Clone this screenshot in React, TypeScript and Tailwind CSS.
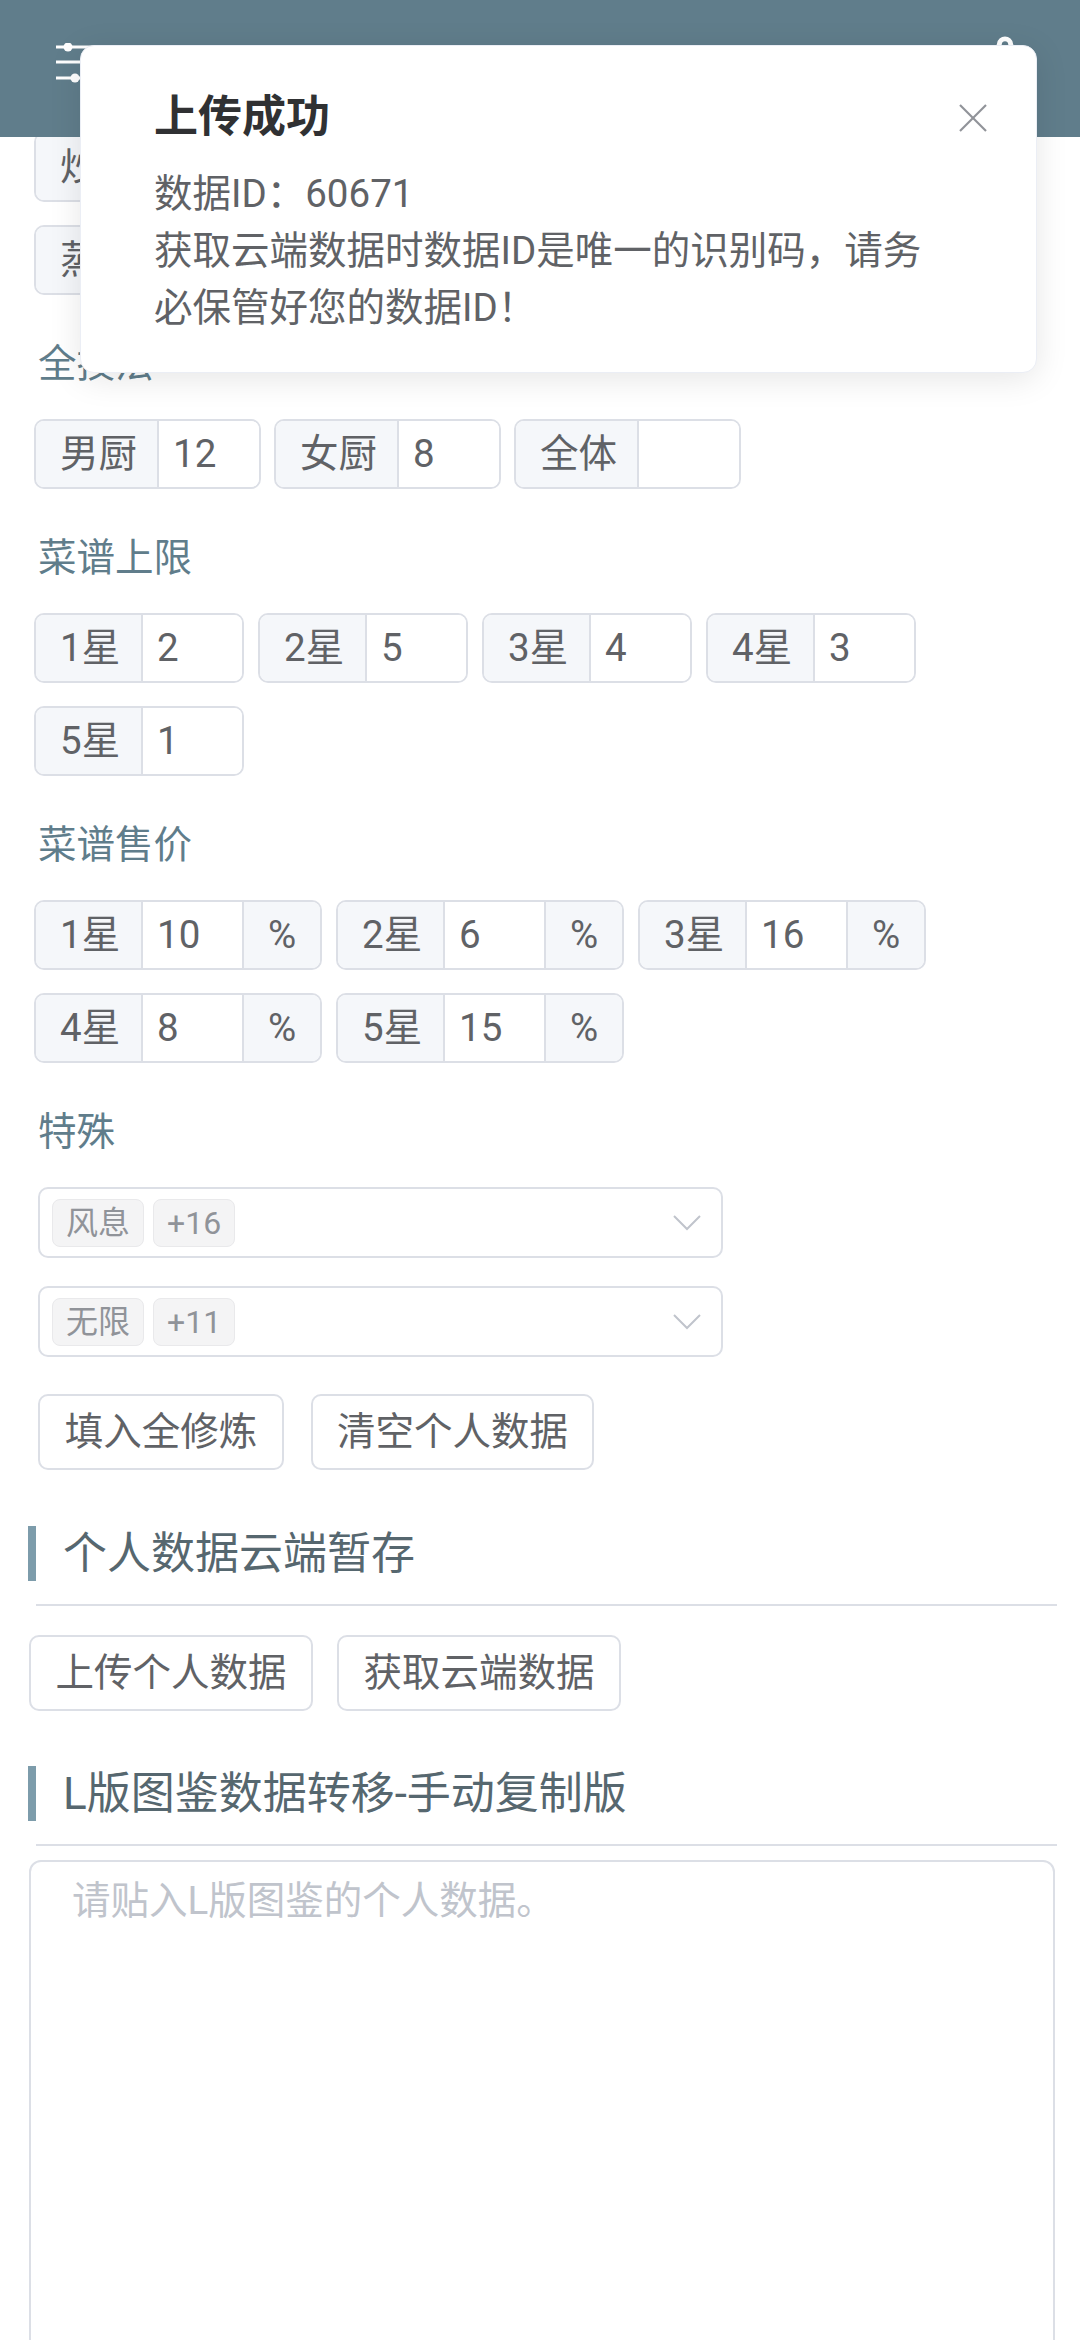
import React from "react";
import { Settings } from "lucide-react";

type GroupProps = {
  label: string;
  value?: string;
  lw: string;
  iw: string;
  suffix?: boolean;
};

function Group({ label, value, lw, iw, suffix }: GroupProps) {
  return (
    <div className="flex h-[70px] overflow-hidden rounded-[10px] border-2 border-[#dcdfe6] text-[38.5px] text-[#606266]">
      <div className={`${lw} flex items-center border-r-2 border-[#dcdfe6] bg-[#f5f7fa] pl-[24px] whitespace-nowrap`}>
        {label}
      </div>
      <div className={`${iw} flex items-center bg-white pl-[14px]`}>{value}</div>
      {suffix && (
        <div className="flex w-[78px] items-center justify-center border-l-2 border-[#dcdfe6] bg-[#f5f7fa]">
          %
        </div>
      )}
    </div>
  );
}

function SectionLabel({ children }: { children: React.ReactNode }) {
  return (
    <div className="mt-[40px] h-[58px] pl-[4px] text-[38.5px] leading-[58px] text-[#607d8b]">
      {children}
    </div>
  );
}

function Chevron() {
  return (
    <svg width="28" height="16" viewBox="0 0 28 16" fill="none">
      <polyline points="1,1 14,14 27,1" stroke="#c0c4cc" strokeWidth="2" fill="none" />
    </svg>
  );
}

function SelectBox({ tag, more }: { tag: string; more: string }) {
  return (
    <div className="ml-[4px] flex h-[71px] w-[685px] items-center rounded-[10px] border-2 border-[#dcdfe6] bg-white pl-[12px] pr-[20px]">
      <div className="flex h-[48px] items-center rounded-[8px] border border-[#e9e9eb] bg-[#f4f4f5] px-[13px] text-[32px] text-[#909399]">
        {tag}
      </div>
      <div className="ml-[9px] flex h-[48px] items-center rounded-[8px] border border-[#e9e9eb] bg-[#f4f4f5] px-[13px] text-[32px] text-[#909399]">
        {more}
      </div>
      <div className="ml-auto flex items-center">
        <Chevron />
      </div>
    </div>
  );
}

function Btn({ children, w }: { children: React.ReactNode; w: string }) {
  return (
    <div className={`${w} flex h-[76px] items-center justify-center rounded-[10px] border-2 border-[#dcdfe6] bg-white text-[38.5px] text-[#606266] whitespace-nowrap`}>
      {children}
    </div>
  );
}

function Heading({ children }: { children: React.ReactNode }) {
  return (
    <div className="flex h-[55px] items-center">
      <div className="h-full w-[8px] bg-[#7d9cab]" />
      <div className="pl-[27px] text-[44px] leading-none text-[#56676f] whitespace-nowrap">{children}</div>
    </div>
  );
}

export default function App() {
  return (
    <div className="relative min-h-[2340px] w-[1080px] overflow-hidden bg-white font-['Roboto','Noto_Sans_CJK_SC',sans-serif]">
      {/* header */}
      <div className="absolute inset-x-0 top-0 z-10 h-[137px] bg-[#607d8b]">
        <svg className="absolute left-[56px] top-[43px]" width="60" height="40" viewBox="0 0 60 40" fill="none">
          <line x1="0" y1="4" x2="60" y2="4" stroke="white" strokeWidth="3" />
          <line x1="0" y1="19" x2="60" y2="19" stroke="white" strokeWidth="3" />
          <line x1="0" y1="35" x2="60" y2="35" stroke="white" strokeWidth="3" />
          <circle cx="12" cy="4" r="4.5" fill="white" />
          <circle cx="38" cy="19" r="4.5" fill="white" />
          <circle cx="19" cy="35" r="4.5" fill="white" />
        </svg>
        <div className="absolute left-[976px] top-[34px] text-white">
          <Settings size={58} strokeWidth={2} />
        </div>
      </div>

      {/* form content */}
      <div className="px-[34px] pt-[132px]">
        <div className="flex flex-col gap-y-[23px]">
          <div className="flex gap-x-[14px]">
            <Group label="炒" value="" lw="w-[107px]" iw="w-[99px]" />
            <Group label="烤" value="" lw="w-[107px]" iw="w-[99px]" />
            <Group label="煮" value="" lw="w-[107px]" iw="w-[99px]" />
          </div>
          <div className="flex gap-x-[14px]">
            <Group label="蒸" value="" lw="w-[107px]" iw="w-[99px]" />
            <Group label="炸" value="" lw="w-[107px]" iw="w-[99px]" />
            <Group label="切" value="" lw="w-[107px]" iw="w-[99px]" />
          </div>
        </div>

        <SectionLabel>全技法</SectionLabel>
        <div className="mt-[26px] flex flex-wrap gap-x-[13px] gap-y-[23px]">
          <Group label="男厨" value="12" lw="w-[123px]" iw="w-[100px]" />
          <Group label="女厨" value="8" lw="w-[123px]" iw="w-[100px]" />
          <Group label="全体" value="" lw="w-[123px]" iw="w-[100px]" />
        </div>

        <SectionLabel>菜谱上限</SectionLabel>
        <div className="mt-[26px] flex flex-wrap gap-x-[14px] gap-y-[23px]">
          <Group label="1星" value="2" lw="w-[107px]" iw="w-[99px]" />
          <Group label="2星" value="5" lw="w-[107px]" iw="w-[99px]" />
          <Group label="3星" value="4" lw="w-[107px]" iw="w-[99px]" />
          <Group label="4星" value="3" lw="w-[107px]" iw="w-[99px]" />
          <Group label="5星" value="1" lw="w-[107px]" iw="w-[99px]" />
        </div>

        <SectionLabel>菜谱售价</SectionLabel>
        <div className="mt-[26px] flex flex-wrap gap-x-[14px] gap-y-[23px]">
          <Group label="1星" value="10" lw="w-[107px]" iw="w-[99px]" suffix />
          <Group label="2星" value="6" lw="w-[107px]" iw="w-[99px]" suffix />
          <Group label="3星" value="16" lw="w-[107px]" iw="w-[99px]" suffix />
          <Group label="4星" value="8" lw="w-[107px]" iw="w-[99px]" suffix />
          <Group label="5星" value="15" lw="w-[107px]" iw="w-[99px]" suffix />
        </div>

        <SectionLabel>特殊</SectionLabel>
        <div className="mt-[26px]">
          <SelectBox tag="风息" more="+16" />
        </div>
        <div className="mt-[28px]">
          <SelectBox tag="无限" more="+11" />
        </div>
        <div className="ml-[4px] mt-[37px] flex gap-x-[27px]">
          <Btn w="w-[246px]">填入全修炼</Btn>
          <Btn w="w-[283px]">清空个人数据</Btn>
        </div>
      </div>

      {/* cloud section */}
      <div className="pl-[28px] pr-[23px]">
        <div className="mt-[56px]">
          <Heading>个人数据云端暂存</Heading>
        </div>
        <div className="ml-[8px] mt-[23px] h-[2px] bg-[#dcdfe6]" />
        <div className="ml-[1px] mt-[29px] flex gap-x-[24px]">
          <Btn w="w-[284px]">上传个人数据</Btn>
          <Btn w="w-[284px]">获取云端数据</Btn>
        </div>
        <div className="mt-[55px]">
          <Heading>L版图鉴数据转移-手动复制版</Heading>
        </div>
        <div className="ml-[8px] mt-[23px] h-[2px] bg-[#dcdfe6]" />
        <div className="ml-[1px] mr-[2px] mt-[14px]">
          <textarea
            readOnly
            placeholder="请贴入L版图鉴的个人数据。"
            className="block h-[640px] w-full resize-none rounded-[12px] border-2 border-[#dcdfe6] bg-white px-[41px] pt-[10px] text-[38.5px] leading-[58px] text-[#606266] outline-none placeholder:text-[#c0c4cc]"
          />
        </div>
      </div>

      {/* notification */}
      <div className="absolute left-[80px] top-[45px] z-20 w-[957px] rounded-[14px] border border-[#ebeef5] bg-white pb-[36px] pl-[73px] pt-[38px] shadow-[0_6px_33px_rgba(0,0,0,0.1)]">
        <div className="text-[44px] font-bold leading-[66px] text-[#303133]">上传成功</div>
        <div className="mt-[15px] text-[38.5px] leading-[57px] text-[#606266] whitespace-nowrap">
          <div>数据ID：60671</div>
          <div>获取云端数据时数据ID是唯一的识别码，请务</div>
          <div>必保管好您的数据ID！</div>
        </div>
        <svg className="absolute right-[49px] top-[58px]" width="28" height="28" viewBox="0 0 28 28" fill="none">
          <line x1="1" y1="1" x2="27" y2="27" stroke="#909399" strokeWidth="2.2" />
          <line x1="27" y1="1" x2="1" y2="27" stroke="#909399" strokeWidth="2.2" />
        </svg>
      </div>
    </div>
  );
}
